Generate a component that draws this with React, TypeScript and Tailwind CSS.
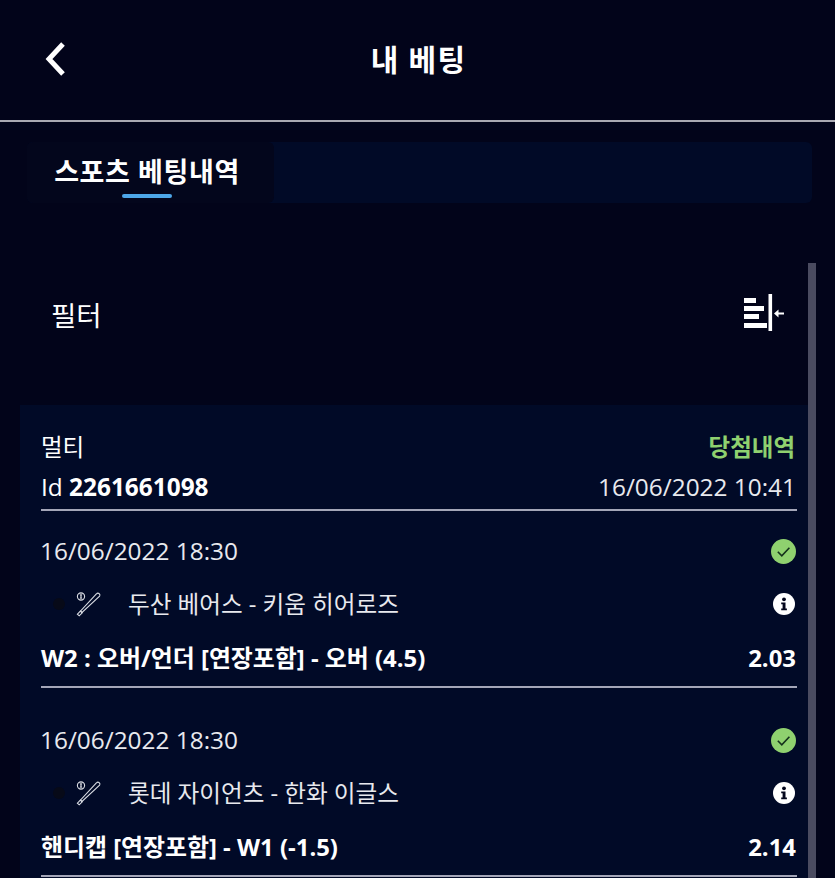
import React from 'react';

const BatIcon = () => (
  <svg width="28" height="28" viewBox="0 0 28 28" fill="none" stroke="#d8dbe2" strokeWidth="1.1" className="shrink-0">
    <circle cx="7" cy="6.5" r="3.6" />
    <path d="M6 3.5c.9 2 .9 4 0 6M8 3.5c-.9 2-.9 4 0 6" strokeWidth="0.8" />
    <path d="M25 3.5c1 .8 1.2 1.8.6 2.6L8 22.5l-1.6-1.4L22.4 4c.7-.8 1.7-1.1 2.6-.5z" />
    <path d="M8.2 22.8l-3 3-1.8-1.6 3-3.2z" />
  </svg>
);

const CheckIcon = () => (
  <svg width="25" height="25" viewBox="0 0 25 25">
    <circle cx="12.5" cy="12.5" r="12.5" fill="#8fd16f" />
    <path d="M6.8 12.8l4 4 7.6-8" fill="none" stroke="#14301c" strokeWidth="1.6" />
  </svg>
);

const InfoIcon = () => (
  <svg width="22" height="22" viewBox="0 0 22 22">
    <circle cx="11" cy="11" r="11" fill="#ffffff" />
    <circle cx="11" cy="6.3" r="1.9" fill="#03061c" />
    <path d="M8.2 9.4h4.3v6h1.4v1.9H8.2v-1.9h1.4v-4.1H8.2z" fill="#03061c" />
  </svg>
);

const FilterIcon = () => (
  <svg width="42" height="38" viewBox="0 0 42 38" fill="#ffffff" className="mb-[7px] shrink-0">
    <rect x="2" y="4" width="12" height="5" />
    <rect x="2" y="12" width="20" height="5" />
    <rect x="2" y="20" width="15" height="5" />
    <rect x="2" y="29" width="23" height="5" />
    <rect x="26.5" y="0" width="3.6" height="37" />
    <path d="M32 19.5l4.5-4v3h5.5v2h-5.5v3z" />
  </svg>
);

type Selection = { time: string; match: string; pick: string; odds: string };

const selections: Selection[] = [
  { time: '16/06/2022 18:30', match: '두산 베어스 - 키움 히어로즈', pick: 'W2 : 오버/언더 [연장포함] - 오버 (4.5)', odds: '2.03' },
  { time: '16/06/2022 18:30', match: '롯데 자이언츠 - 한화 이글스', pick: '핸디캡 [연장포함] - W1 (-1.5)', odds: '2.14' },
];

export default function App() {
  return (
    <div className="h-[878px] w-[835px] overflow-hidden bg-[#02041a] text-white font-['Open_Sans','Noto_Sans_CJK_KR',sans-serif]">
      {/* Header */}
      <header className="relative flex h-[122px] items-center justify-center border-b-2 border-[#a9a9b2] pb-[2px]">
        <svg width="24" height="36" viewBox="0 0 24 36" fill="none" stroke="#ffffff" strokeWidth="5" className="absolute left-[44px] top-[41px]">
          <path d="M19 3L5 18l14 15" />
        </svg>
        <h1 className="pl-[2px] text-[30px] font-bold tracking-[1.2px]">내 베팅</h1>
      </header>

      {/* Tabs */}
      <div className="mx-[27px] mt-[20px] flex h-[61px] w-[785px] rounded-md bg-[#010a27]">
        <div className="relative flex w-[247px] items-center justify-center rounded-md bg-[#03061c] pr-[7px]">
          <span className="text-[27px] font-bold tracking-[0.6px]">스포츠 베팅내역</span>
          <div className="absolute bottom-[5px] left-[95px] h-[4px] w-[50px] rounded-sm bg-[#4da6e8]" />
        </div>
      </div>

      {/* Scroll area */}
      <div className="relative">
        <div className="absolute left-[808px] top-[60px] h-[700px] w-[8px] bg-[#4a4b60]" />

        <div className="flex h-[202px] items-center justify-between pl-[51px] pr-[51px] pt-[24px]">
          <span className="text-[27.5px]">필터</span>
          <FilterIcon />
        </div>

        <div className="ml-[20px] w-[788px] bg-[#010a27] pb-10 pl-[21px] pr-[11px] pt-[22px]">
          <div className="flex items-center justify-between pr-[2px] text-[23.5px] leading-[40px]">
            <span>멀티</span>
            <span className="font-bold text-[#8fd16f]">당첨내역</span>
          </div>
          <div className="flex h-[44px] items-center justify-between border-b-2 border-[#a4a6b8] pb-[2px] pr-[1px] text-[24.4px]">
            <span>Id <span className="font-bold">2261661098</span></span>
            <span className="text-[#e8e9ee]">16/06/2022 10:41</span>
          </div>

          {selections.map((s, i) => (
            <div key={i} className={`border-b-2 border-[#a4a6b8] ${i > 0 ? 'mt-[12px]' : ''}`}>
              <div className="flex h-[81px] items-center justify-between pb-[1px] pr-[1px]">
                <span className="-ml-[1px] text-[24.4px] text-[#e8e9ee]">{s.time}</span>
                <CheckIcon />
              </div>
              <div className="flex h-[24px] items-center justify-between pr-[2px]">
                <div className="flex items-center">
                  <div className="ml-[12px] h-[12px] w-[12px] rounded-full bg-[#070a18]" />
                  <div className="ml-[9px] flex"><BatIcon /></div>
                  <span className="ml-[26px] mt-[1px] text-[23.6px] text-[#e8e9ee]">{s.match}</span>
                </div>
                <InfoIcon />
              </div>
              <div className="flex h-[70px] items-center justify-between pr-[1px] pt-[13px] text-[23.9px] font-bold">
                <span>{s.pick}</span>
                <span>{s.odds}</span>
              </div>
            </div>
          ))}
        </div>
      </div>
    </div>
  );
}
